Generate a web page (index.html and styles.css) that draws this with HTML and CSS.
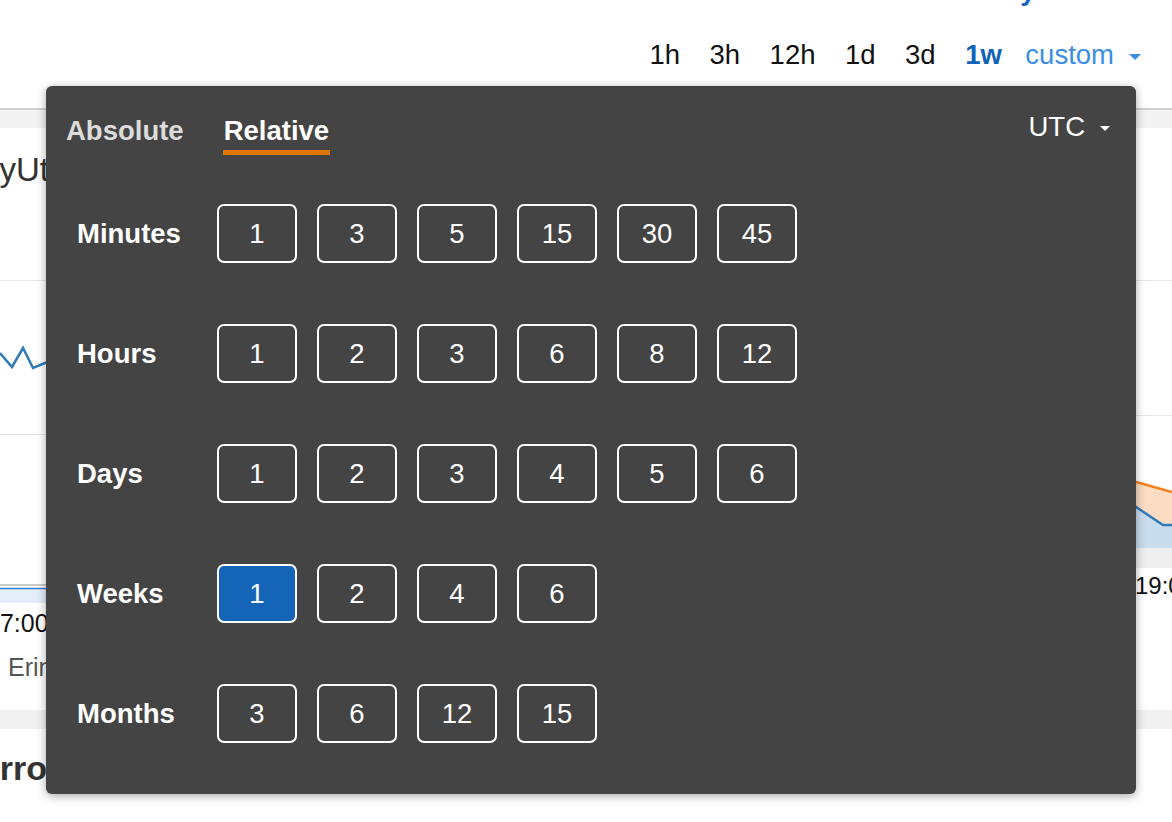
FILE: index.html
```html
<!DOCTYPE html>
<html lang="en">
<head>
<meta charset="utf-8">
<title>Time range</title>
<link rel="stylesheet" href="styles.css">
</head>
<body>
<div class="page">
  <div class="crumb">My custom</div>
  <nav class="range">
    <span class="range-item">1h</span>
    <span class="range-item">3h</span>
    <span class="range-item">12h</span>
    <span class="range-item">1d</span>
    <span class="range-item">3d</span>
    <span class="range-item is-active">1w</span>
    <span class="range-item is-custom">custom<i class="caret caret-blue"></i></span>
  </nav>

  <div class="panel-bar"></div>
  <div class="cols">
    <section class="card card-left">
      <h2 class="card-title">MyUtilization</h2>
      <svg class="chart chart-left" width="580" height="415" viewBox="0 0 580 415">
        <line x1="0" y1="90.5" x2="580" y2="90.5" stroke="#e6e6e6" stroke-width="1"/>
        <polyline points="0,163 12,177 23,158 33,178 45,173 80,166 120,170 160,160 200,172 260,165 320,171 380,162 440,169 500,164 580,168" fill="none" stroke="#2f7bb8" stroke-width="2.5" stroke-linejoin="miter"/>
        <line x1="0" y1="244.5" x2="580" y2="244.5" stroke="#e6e6e6" stroke-width="1"/>
        <rect x="0" y="398" width="580" height="15" fill="#e3eefa"/>
        <line x1="0" y1="395" x2="580" y2="395" stroke="#c9c9c9" stroke-width="2"/>
        <line x1="0" y1="398.5" x2="580" y2="398.5" stroke="#2f80cc" stroke-width="1.5"/>
      </svg>
      <div class="axis axis-left">17:00</div>
      <div class="legend">Erin</div>
    </section>
    <section class="card card-right">
      <svg class="chart chart-right" width="580" height="440" viewBox="0 0 580 440">
        <line x1="0" y1="152.5" x2="580" y2="152.5" stroke="#e6e6e6" stroke-width="1"/>
        <line x1="0" y1="287.5" x2="580" y2="287.5" stroke="#e6e6e6" stroke-width="1"/>
        <polygon points="500,340 544,354 580,364 580,397 571,397 544,379 500,372" fill="#fcdcc2"/>
        <polygon points="500,372 544,379 571,397 580,397 580,420 500,420" fill="#c9dcec"/>
        <polyline points="500,340 544,354 580,364" fill="none" stroke="#f58220" stroke-width="2.5"/>
        <polyline points="500,372 544,379 571,397 580,397" fill="none" stroke="#2f7bb8" stroke-width="2.5"/>
        <rect x="0" y="420" width="580" height="20" fill="#eeeeee"/>
      </svg>
      <div class="axis axis-right">19:00</div>
    </section>
  </div>
  <div class="panel-bar panel-bar-plain"></div>
  <h2 class="card-title card-title-bold">Errors</h2>
</div>

<div class="popover">
  <div class="pop-head">
    <div class="tabs">
      <span class="tab">Absolute</span>
      <span class="tab is-active">Relative</span>
    </div>
    <div class="tz">UTC<i class="caret caret-white"></i></div>
  </div>
  <div class="rows">
    <div class="row">
      <span class="row-label">Minutes</span>
      <div class="btns">
        <button class="btn">1</button><button class="btn">3</button><button class="btn">5</button><button class="btn">15</button><button class="btn">30</button><button class="btn">45</button>
      </div>
    </div>
    <div class="row">
      <span class="row-label">Hours</span>
      <div class="btns">
        <button class="btn">1</button><button class="btn">2</button><button class="btn">3</button><button class="btn">6</button><button class="btn">8</button><button class="btn">12</button>
      </div>
    </div>
    <div class="row">
      <span class="row-label">Days</span>
      <div class="btns">
        <button class="btn">1</button><button class="btn">2</button><button class="btn">3</button><button class="btn">4</button><button class="btn">5</button><button class="btn">6</button>
      </div>
    </div>
    <div class="row">
      <span class="row-label">Weeks</span>
      <div class="btns">
        <button class="btn is-selected">1</button><button class="btn">2</button><button class="btn">4</button><button class="btn">6</button>
      </div>
    </div>
    <div class="row">
      <span class="row-label">Months</span>
      <div class="btns">
        <button class="btn">3</button><button class="btn">6</button><button class="btn">12</button><button class="btn">15</button>
      </div>
    </div>
  </div>
</div>
</body>
</html>
```
FILE: styles.css
```css
html, body {
  margin: 0;
  padding: 0;
  background: #ffffff;
  overflow: hidden;
}
body {
  font-family: "Liberation Sans", Arial, Helvetica, sans-serif;
  width: 1172px;
  height: 822px;
  position: relative;
}
.page {
  width: 1172px;
}
.crumb {
  margin-top: -25px;
  height: 32px;
  line-height: 32px;
  font-size: 27.5px;
  font-weight: bold;
  color: #1565c0;
  text-align: right;
  padding-right: 31px;
}
.range {
  margin-top: 32px;
  display: flex;
  justify-content: flex-end;
  gap: 29.5px;
  padding-right: 31px;
  font-size: 27.5px;
  line-height: 32px;
  height: 32px;
  color: #111;
}
.range-item.is-active {
  font-weight: bold;
  color: #1262b9;
}
.range-item.is-custom {
  color: #3a8ee4;
  margin-left: -6px;
}
.caret {
  display: inline-block;
  width: 0;
  height: 0;
  vertical-align: middle;
}
.caret-blue {
  margin-left: 15px;
  border-left: 6px solid transparent;
  border-right: 6px solid transparent;
  border-top: 6px solid #3a8ee4;
}
.caret-white {
  margin-left: 15px;
  border-left: 5px solid transparent;
  border-right: 5px solid transparent;
  border-top: 5px solid #ffffff;
}
.panel-bar {
  margin-top: 37px;
  height: 18px;
  border-top: 2px solid #cfcfcf;
  background: #f2f2f2;
}
.panel-bar-plain {
  margin-top: 0;
  height: 19px;
  border-top: none;
  background: #f0f0f0;
}
.cols {
  display: grid;
  grid-template-columns: 580px 580px;
  column-gap: 12px;
  height: 582px;
  overflow: hidden;
}
.card {
  overflow: hidden;
}
.card-title {
  margin: 22px 0 0 -28px;
  font-size: 33px;
  line-height: 40px;
  font-weight: normal;
  color: #333;
  white-space: nowrap;
}
.card-title-bold {
  margin: 19px 0 0 -23px;
  font-size: 34px;
  font-weight: bold;
}
.chart {
  display: block;
}
.axis {
  font-size: 25px;
  line-height: 30px;
  color: #111;
  white-space: nowrap;
}
.axis-left {
  margin: 3px 0 0 -14px;
}
.axis-right {
  margin-top: 4px;
  padding-left: 543px;
  font-size: 24px;
  line-height: 28px;
}
.legend {
  margin: 14px 0 0 8px;
  font-size: 25px;
  line-height: 30px;
  color: #555;
}

/* popover */
.popover {
  position: absolute;
  left: 46px;
  top: 86px;
  width: 1090px;
  height: 708px;
  box-sizing: border-box;
  padding: 25px 26px 0 19px;
  background: #444444;
  border-radius: 6px;
  box-shadow: 0 2px 10px rgba(0, 0, 0, 0.35);
  color: #fff;
}
.pop-head {
  display: flex;
  justify-content: space-between;
  align-items: flex-start;
}
.tabs {
  display: flex;
  gap: 38px;
  padding-top: 4px;
}
.tab {
  font-size: 27.5px;
  line-height: 32px;
  font-weight: bold;
  color: #dcdcdc;
  padding: 0 1px 3px;
  border-bottom: 5px solid transparent;
}
.tab.is-active {
  color: #ffffff;
  border-bottom-color: #e07600;
}
.tz {
  font-size: 27.5px;
  line-height: 32px;
  color: #fff;
}
.rows {
  margin-top: 49px;
  padding-left: 12px;
  display: flex;
  flex-direction: column;
  gap: 61px;
}
.row {
  display: flex;
  align-items: center;
  height: 59px;
}
.row-label {
  width: 140px;
  font-size: 27.5px;
  font-weight: bold;
  color: #fff;
}
.btns {
  display: flex;
  gap: 20px;
}
.btn {
  width: 80px;
  height: 59px;
  box-sizing: border-box;
  border: 2px solid #ffffff;
  border-radius: 7px;
  background: transparent;
  color: #ffffff;
  font-family: "Liberation Sans", Arial, Helvetica, sans-serif;
  font-size: 27.5px;
  display: flex;
  align-items: center;
  justify-content: center;
  padding: 0;
  margin: 0;
}
.btn.is-selected {
  background: #1464b8;
}
```
